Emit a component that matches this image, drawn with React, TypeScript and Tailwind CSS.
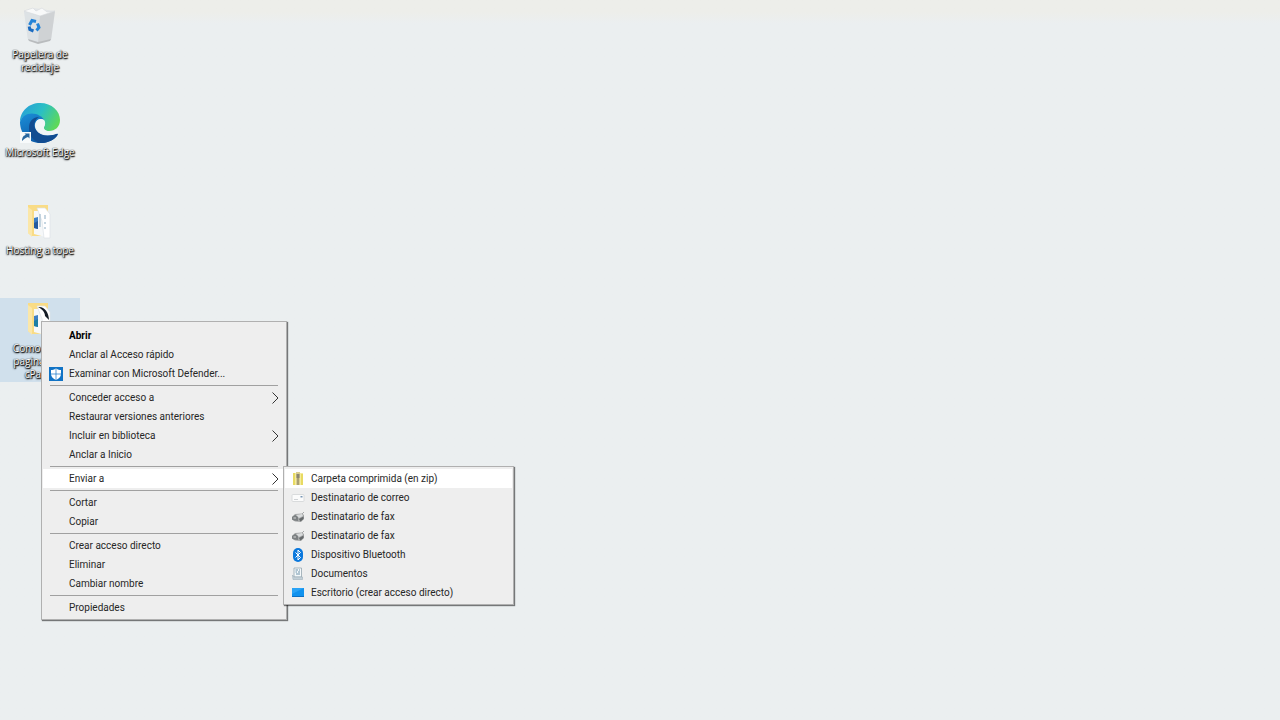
import type { ReactNode } from "react";
import clsx from "clsx";

interface Entry {
  label: string;
  icon?: ReactNode;
  bold?: boolean;
  submenu?: boolean;
}

function RecycleBin() {
  return (
    <svg width="40" height="40" viewBox="0 0 40 40">
      <path d="M4 6 L14 3 L35 6 L31 35 L18 38 L8 35 Z" fill="#e3e6e8" />
      <path d="M4 6 L20 9 L18 38 L8 35 Z" fill="#dde2e5" />
      <path d="M20 9 L35 6 L31 35 L18 38 Z" fill="#cfd2d4" />
      <path d="M4 6 L13 3 L16 6 L22 3 L27 7 L35 6 L20 11 Z" fill="#f8f9f9" stroke="#d5d9db" strokeWidth="0.6" />
      <path d="M8 34 L18 37 L31 34 L30 36 L18 39 L9 36 Z" fill="#b9bcbe" />
      <g fill="none" stroke="#2383d8" strokeWidth="3">
        <path d="M9.500 20 L12 15.500 L16 16.500" />
        <path d="M17.500 18.500 L19 22.500 L16.500 25.500" />
        <path d="M13.500 26 L9.800 24.500 L9.200 21.500" stroke="#1b6bc0" />
      </g>
    </svg>
  );
}

function EdgeLogo() {
  return (
    <svg width="42" height="42" viewBox="0 0 42 42">
      <defs>
        <linearGradient id="edgeTop" x1="0" y1="0.2" x2="1" y2="0.6">
          <stop offset="0" stopColor="#279fd8" />
          <stop offset="0.5" stopColor="#2bbfc4" />
          <stop offset="1" stopColor="#5fd958" />
        </linearGradient>
        <linearGradient id="edgeLeft" x1="0" y1="0" x2="0.6" y2="1">
          <stop offset="0" stopColor="#1b8fd8" />
          <stop offset="1" stopColor="#0c56a4" />
        </linearGradient>
      </defs>
      <path d="M1 20 C1 9 10 1 21 1 C33 1 41 9 41 18 C41 25 36 29 30 29 C26 29 24 27 25 25 C27 22 26 15 18 13 C10 11 3 14 1 20 Z" fill="url(#edgeTop)" />
      <path d="M1 20 C3 13 10 10 17 12 C23 14 25 17 25 18 C20 15 15 20 16 25 C17 32 25 36 37 32 C40 31 39 33 37 35 C33 39 27 41 21 41 C10 41 1 32 1 20 Z" fill="url(#edgeLeft)" />
      <path d="M10 26 C10 19 14 15 20 15 C15 18 14 24 17 28 C21 34 29 35 37 32 C39 31 39 33 37 35 C33 39 27 41 22 41 C15 40 10 34 10 26 Z" fill="#124c91" />
      <path d="M25 18 C19 15 15 20 17 26 C20 33 31 35 39 31 C40 29 39 28 38 28 C34 30 24 30 25 25 C26 23 27 21 25 18 Z" fill="#f1f5f6" />
      <rect x="1" y="30" width="11" height="11" fill="#f7fafb" />
      <path d="M3 39 C3 35 5 33 7 33 L5.500 31.500 H10.500 V36.500 L9 35 C6 36 5 37 3 39 Z" fill="#28679f" />
    </svg>
  );
}

function Folder({ dark = false }: { dark?: boolean }) {
  return (
    <svg width="40" height="40" viewBox="0 0 40 40">
      <path d="M8 4 H28 V35 H12 L8 32 Z" fill="#f9dc86" />
      <path d="M8 6 L12 9 V36 L8 32 Z" fill="#fbe7a8" />
      <path d="M14 10 H24 L29 15 V37 L14 33 Z" fill="#f6f8f9" />
      <path d="M17 7 H25 L30 13 V37 H24 L22 20 Z" fill="#ffffff" stroke="#dce2e6" strokeWidth="0.7" />
      <path d="M14 17 L18 16 V28 L14 27 Z" fill="#3e7fc4" />
      <path d="M14 22 L18 20 V28 L14 27 Z" fill={dark ? "#1c7ea4" : "#235b9f"} />
      {dark ? (
        <path d="M18 8 C24 7 29 13 29 21 L25 17 C25 13 22 10 18 8 Z" fill="#141c25" />
      ) : (
        <path d="M20 13 V26 M25 14 V18 M25 21 V23 M25 26 V28" stroke="#b4c9d8" strokeWidth="1.500" />
      )}
    </svg>
  );
}

function DefenderIcon() {
  return (
    <svg width="14" height="14" viewBox="0 0 14 14">
      <rect width="14" height="14" fill="#1173c5" />
      <path d="M7 1.500 C9 2.500 10.500 3 12 3 V7 C12 10 9.500 12 7 13 C4.500 12 2 10 2 7 V3 C3.500 3 5 2.500 7 1.500 Z" fill="#fff" />
      <path d="M7 2 V13 M2 7 H12" stroke="#1173c5" strokeWidth="0.700" />
    </svg>
  );
}

function ZipIcon() {
  return (
    <svg width="14" height="14" viewBox="0 0 14 14">
      <path d="M2 1 H12 V13 H2 Z" fill="#f5ec9c" />
      <path d="M2 1 H4 V13 H2 Z M10 2 H12 V13 H10 Z" fill="#e8da62" />
      <path d="M5 0 H9 V13 H5 Z" fill="#d9ce92" />
      <path d="M7 5 V13" stroke="#9a9069" strokeWidth="1.500" />
      <path d="M5.500 2 H8.500 V6 H5.500 Z" fill="#8b8671" />
    </svg>
  );
}

function MailIcon() {
  return (
    <svg width="14" height="14" viewBox="0 0 14 14">
      <rect x="1" y="3.500" width="12" height="7" rx="1" fill="#fbfbfb" stroke="#d2d4d6" strokeWidth="0.800" />
      <path d="M3 8.500 H7" stroke="#d0d3d6" />
      <path d="M9.500 5 H11.500 V6.500 H9.500 Z" fill="#7896b4" />
    </svg>
  );
}

function FaxIcon() {
  return (
    <svg width="14" height="14" viewBox="0 0 14 14">
      <path d="M1 7 L4 4 L11 3.500 L13 5 V9 L10 12 L4 11.500 L1 9.500 Z" fill="#a5a7a8" />
      <path d="M1 7 L4 5 L7 6 V11 L3 10.500 L1 9.500 Z" fill="#7c8082" />
      <path d="M5 5 L11 4 L12 6 L8 8 Z" fill="#d9dbdc" />
      <path d="M8 9 L12.500 6.500 V9 L9.500 11.500 Z" fill="#65696b" />
      <path d="M11 4 L13 2" stroke="#a5a7a8" />
      <path d="M2.500 8 H5" stroke="#d3d4d4" />
    </svg>
  );
}

function BluetoothIcon() {
  return (
    <svg width="14" height="14" viewBox="0 0 14 14">
      <rect x="2" y="0" width="10" height="14" rx="5" fill="#0a78dd" />
      <path d="M4.500 4.500 L9.500 9.500 L7 12 V2 L9.500 4.500 L4.500 9.500" fill="none" stroke="#fff" strokeWidth="1" />
    </svg>
  );
}

function DocumentsIcon() {
  return (
    <svg width="14" height="14" viewBox="0 0 14 14">
      <path d="M3 1 H10.500 V10 H3 Z" fill="#f4f8fa" stroke="#95a6b0" strokeWidth="0.800" />
      <path d="M4.500 3 H7 M8 3 H9 M4.500 5 H6 M7 5 H9 M5 7 H9" stroke="#6f93aa" strokeWidth="1" />
      <path d="M1.500 8 L3 10 H11.500 V12.500 H2 Z" fill="#c3d0d8" stroke="#9fb0ba" strokeWidth="0.600" />
    </svg>
  );
}

function DesktopIcon() {
  return (
    <svg width="14" height="14" viewBox="0 0 14 14">
      <rect x="1" y="2" width="12" height="9" fill="#1192ee" />
      <path d="M1 2 H13 L1 8 Z" fill="#2ba3f5" />
      <path d="M1 10.500 H13" stroke="#0c6fc2" />
    </svg>
  );
}

const shortcuts = [
  { lines: ["Papelera de", "reciclaje"], icon: <RecycleBin /> },
  { lines: ["Microsoft Edge"], icon: <EdgeLogo /> },
  { lines: ["Hosting a tope"], icon: <Folder /> },
  { lines: ["Como crear", "pagina web", "cPanel"], icon: <Folder dark />, selected: true },
];

const groups: Entry[][] = [
  [
    { label: "Abrir", bold: true },
    { label: "Anclar al Acceso rápido" },
    { label: "Examinar con Microsoft Defender...", icon: <DefenderIcon /> },
  ],
  [
    { label: "Conceder acceso a", submenu: true },
    { label: "Restaurar versiones anteriores" },
    { label: "Incluir en biblioteca", submenu: true },
    { label: "Anclar a Inicio" },
  ],
  [{ label: "Enviar a", submenu: true }],
  [{ label: "Cortar" }, { label: "Copiar" }],
  [{ label: "Crear acceso directo" }, { label: "Eliminar" }, { label: "Cambiar nombre" }],
  [{ label: "Propiedades" }],
];

const sendTo: Entry[] = [
  { label: "Carpeta comprimida (en zip)", icon: <ZipIcon /> },
  { label: "Destinatario de correo", icon: <MailIcon /> },
  { label: "Destinatario de fax", icon: <FaxIcon /> },
  { label: "Destinatario de fax", icon: <FaxIcon /> },
  { label: "Dispositivo Bluetooth", icon: <BluetoothIcon /> },
  { label: "Documentos", icon: <DocumentsIcon /> },
  { label: "Escritorio (crear acceso directo)", icon: <DesktopIcon /> },
];

function MenuItem({ entry, active }: { entry: Entry; active?: boolean }) {
  return (
    <button
      type="button"
      role="menuitem"
      aria-haspopup={entry.submenu ? "menu" : undefined}
      className={clsx(
        "flex h-[19px] w-full items-center whitespace-nowrap pl-[6px] pr-[6px] text-left",
        active && "bg-white",
        entry.bold && "font-bold text-black"
      )}
    >
      <span className="mr-[6px] flex w-[14px] shrink-0">{entry.icon}</span>
      <span className="grow">{entry.label}</span>
      {entry.submenu && (
        <svg width="7" height="12" viewBox="0 0 7 12" fill="none" stroke="#333" strokeWidth="1">
          <path d="M0.500 0.500 L6 6 L0.500 11.500" />
        </svg>
      )}
    </button>
  );
}

const panel =
  "absolute border border-[#b0b0b0] bg-[#eeeeee] px-px font-['Roboto','Open_Sans',sans-serif] shadow-[1px_1px_1px_rgba(0,0,0,0.5)]";

export default function App() {
  return (
    <main className="relative min-h-screen overflow-hidden bg-[#ebeff0] bg-linear-to-b from-[#edeeea] from-[12px] to-[#ebeff0] to-[24px] pt-1 font-['Open_Sans','Noto_Sans',sans-serif] text-[10px] text-[#262626]">
      <div className="flex w-20 flex-col gap-[14px]">
        {shortcuts.map((item) => (
          <button
            type="button"
            key={item.lines[0]}
            className={clsx(
              "flex h-[84px] w-full flex-col items-center text-center leading-[13px] text-white [text-shadow:0_0_1px_#000,1px_1px_1px_#000,0_1px_2px_#000]",
              item.selected && "bg-[#d0e0ec]"
            )}
          >
            <span className="mb-[2px] flex h-[42px] items-center">{item.icon}</span>
            {item.lines.map((line) => (
              <span key={line} className="whitespace-nowrap">{line}</span>
            ))}
          </button>
        ))}
      </div>

      <div role="menu" aria-label="Carpeta" className={clsx(panel, "left-[41px] top-[321px] w-[246px] pb-[2px] pt-[4px]")}>
        {groups.map((group, i) => (
          <div key={i}>
            {i > 0 && <hr className="mx-[7px] my-[2px] border-t border-[#a0a0a0]" />}
            {group.map((entry) => (
              <MenuItem key={entry.label} entry={entry} active={entry.label === "Enviar a"} />
            ))}
          </div>
        ))}
      </div>

      <div role="menu" aria-label="Enviar a" className={clsx(panel, "left-[283px] top-[466px] w-[231px] pb-[2px] pt-[2px]")}>
        {sendTo.map((entry, i) => (
          <MenuItem key={i} entry={entry} active={i === 0} />
        ))}
      </div>
    </main>
  );
}
